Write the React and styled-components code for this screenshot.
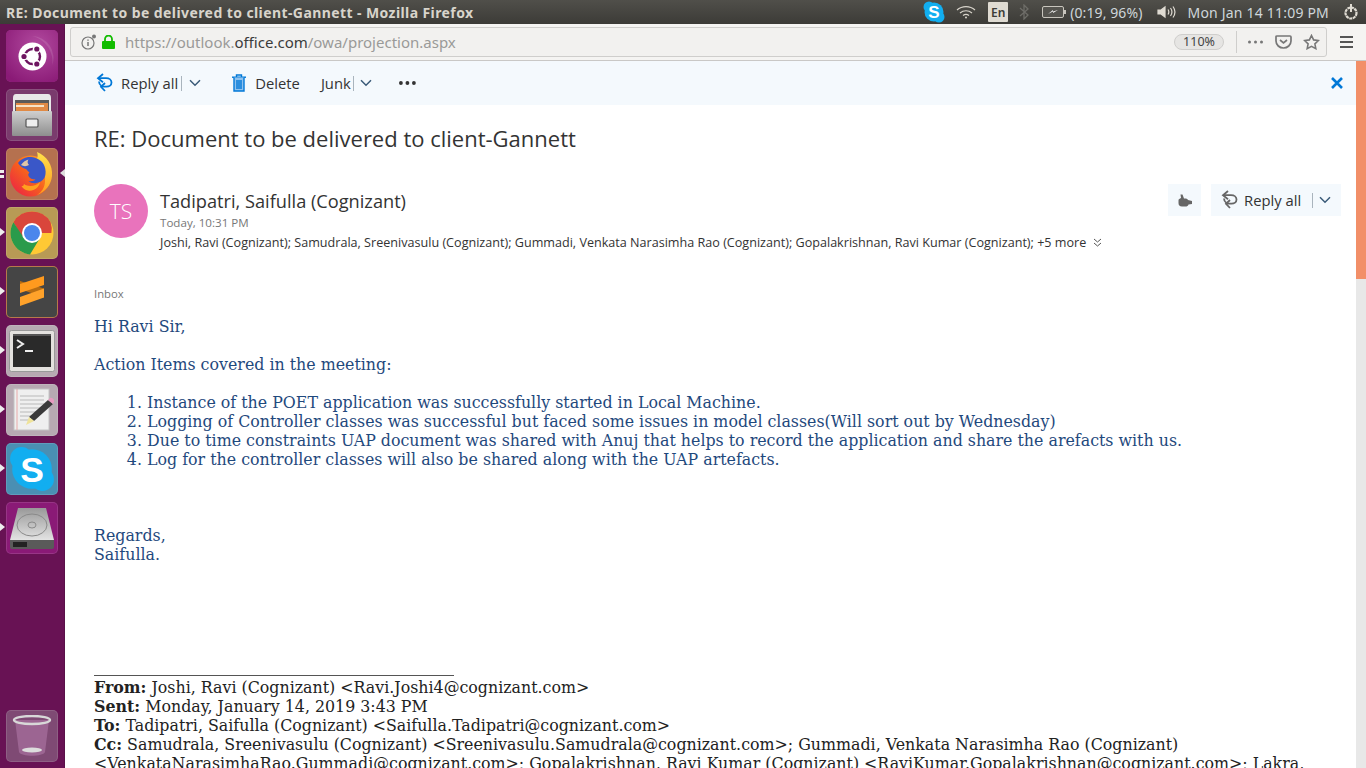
import React from "react";
import styled, { createGlobalStyle } from "styled-components";

const Global = createGlobalStyle`
  html, body { margin: 0; padding: 0; height: 768px; overflow: hidden; background: #fff; }
  #root { height: 768px; }
  * { box-sizing: border-box; }
`;

const Screen = styled.div`
  width: 1366px; height: 768px; display: flex; flex-direction: column; overflow: hidden;
`;
const TopBar = styled.header`
  height: 24px; flex: none; display: flex; align-items: center; padding: 0 0 0 6px;
  background: linear-gradient(#504f4a, #3c3b37);
  color: #dfdbd2; font-family: "Noto Sans", sans-serif; font-size: 14px;
`;
const WindowTitle = styled.div`
  font-weight: 700; letter-spacing: 0.41px; white-space: nowrap; flex: 1; color: #d8d4cb;
`;
const Tray = styled.div`
  display: flex; align-items: center; height: 24px; flex: none;
`;
const TrayIcon = styled.span`
  display: flex; align-items: center; margin-left: ${p => p.$ml || 0}px;
`;
const TrayText = styled.span`
  margin-left: ${p => p.$ml || 0}px; white-space: nowrap; font-size: 14px; color: #cfd6da;
  letter-spacing: ${p => p.$ls || 0}px;
`;
const LangBox = styled.span`
  width: 20px; height: 20px; background: #dfdbd2; color: #3c3b37; border-radius: 1px; margin-left: 12px;
  display: flex; align-items: center; justify-content: center; font-size: 12px; font-weight: 600;
`;
const Body = styled.div`
  flex: 1; display: flex; min-height: 0;
`;
const Launcher = styled.nav`
  width: 65px; flex: none; background: #681254; padding: 6px 0 0 6px; display: flex; flex-direction: column; gap: 7px;
  position: relative; border-right: 1px solid #5a1049;
`;
const Tile = styled.div`
  width: 52px; height: 52px; border-radius: 5px; position: relative; display: flex; align-items: center; justify-content: center;
  background: ${p => p.$bg}; box-shadow: inset 0 0 0 1px ${p => p.$edge || "rgba(255,255,255,.12)"};
`;
const TrashTile = styled(Tile)`
  margin-top: auto; margin-bottom: 6px;
`;
const RunPip = styled.i`
  position: absolute; left: -6px; top: 21px; width: 0; height: 0;
  border-left: 5px solid #eee; border-top: 4px solid transparent; border-bottom: 4px solid transparent;
`;
const DoublePip = styled.i`
  position: absolute; left: -6px; top: 22px; width: 4px; height: 8px;
  background: linear-gradient(#eee 0 3px, transparent 3px 5px, #eee 5px);
`;
const ActivePip = styled.i`
  position: absolute; right: -7px; top: 21px; width: 0; height: 0;
  border-right: 5px solid #ddd; border-top: 4px solid transparent; border-bottom: 4px solid transparent;
`;
const Main = styled.div`
  flex: 1; display: flex; flex-direction: column; min-width: 0; background: #fff;
`;
const NavBar = styled.div`
  height: 37px; flex: none; background: #f5f4f2; border-bottom: 1px solid #c9c8c6; display: flex; align-items: center; padding: 0 0 1px 5px;
`;
const UrlBox = styled.div`
  width: 1257px; height: 30px; background: #f2f1ef; border: 1px solid #cfcecc; border-radius: 3px;
  display: flex; align-items: center; padding: 0 0 0 10px;
`;
const LockIcon = styled.svg`
  margin-left: 5px; flex: none;
`;
const Url = styled.div`
  flex: 1; margin-left: 10px; font-family: "Noto Sans", sans-serif; font-size: 15px; color: #9a9a98; white-space: nowrap;
`;
const UrlStrong = styled.span`
  color: #3b3b3b;
`;
const Zoom = styled.div`
  width: 50px; height: 16px; border-radius: 8px; border: 1px solid #cfcecc; background: #e6e5e3; color: #444;
  font: 12.5px "Noto Sans", sans-serif; display: flex; align-items: center; justify-content: center;
`;
const UrlDivider = styled.div`
  width: 1px; height: 22px; background: #cfcecc; margin: 0 11px 0 12px;
`;
const UrlActions = styled.div`
  display: flex; align-items: center; gap: 11px; padding-right: 6px;
`;
const Burger = styled.div`
  margin-left: 13px; display: flex;
`;
const ContentRow = styled.div`
  flex: 1; display: flex; min-height: 0;
`;
const Mail = styled.main`
  flex: 1; min-width: 0; overflow: hidden; font-family: "Open Sans", sans-serif; color: #333;
`;
const ScrollTrack = styled.div`
  width: 10px; flex: none; background: #e8e8e8;
`;
const ScrollThumb = styled.div`
  height: 218px; background: #f28f68;
`;
const Toolbar = styled.div`
  height: 44px; background: #f4f9fd; display: flex; align-items: center; padding: 0 13px 0 31px; font-size: 14.8px; color: #333;
`;
const ToolItem = styled.div`
  display: flex; align-items: center; white-space: nowrap; margin-left: ${p => p.$ml || 0}px;
`;
const ToolLabel = styled.span`
  margin-left: ${p => p.$ml || 0}px;
`;
const Sep = styled.span`
  width: 1px; height: 15px; background: #a9b4bd; margin: 1px ${p => p.$mr || 7}px 0 ${p => p.$ml || 3}px;
`;
const Dots = styled.div`
  margin-left: 27px; display: flex;
`;
const CloseBtn = styled.div`
  margin-left: auto; display: flex;
`;
const Subject = styled.h1`
  margin: 18px 0 0 29px; font-size: 22px; font-weight: 400; line-height: 30px; color: #333; white-space: nowrap;
`;
const HeaderRow = styled.div`
  display: flex; margin: 31px 15px 0 29px; position: relative;
`;
const Avatar = styled.div`
  width: 54px; height: 54px; border-radius: 50%; background: #e973bc; color: #fff; flex: none;
  display: flex; align-items: center; justify-content: center; font-size: 21px; font-weight: 300;
`;
const Meta = styled.div`
  margin-left: 12px; flex: 1; min-width: 0;
`;
const SenderName = styled.div`
  font-size: 18.2px; line-height: 24px; margin-top: 5px; color: #333; white-space: nowrap;
`;
const Time = styled.div`
  font-size: 11.6px; line-height: 17px; color: #777; margin-top: 1px;
`;
const Recipients = styled.div`
  font-size: 12.6px; line-height: 17px; margin-top: 3px; color: #333; white-space: nowrap; display: flex; align-items: center;
`;
const Actions = styled.div`
  position: absolute; right: 0; top: 0; display: flex; gap: 10px;
`;
const LikeBtn = styled.div`
  height: 32px; width: 33px; background: #f4f9fd; display: flex; align-items: center; justify-content: center;
`;
const ReplyBtn = styled.div`
  height: 32px; width: 130px; background: #f4f9fd; display: flex; align-items: center; padding-left: 10px; font-size: 14.8px; color: #333;
`;
const Folder = styled.div`
  margin: 34px 0 0 29px; font-size: 11.3px; line-height: 17px; color: #777;
`;
const MsgBody = styled.div`
  margin: 15px 15px 0 29px; font-family: "DejaVu Serif", serif; font-size: 15.84px; line-height: 19px; color: #1f497d;
`;
const Para = styled.p`
  margin: 0 0 ${p => p.$mb || 0}px 0; min-height: 19px; white-space: nowrap;
`;
const Steps = styled.ol`
  margin: 19px 0 0 0; padding: 0 0 0 53px;
`;
const Quote = styled.div`
  margin: 111px 15px 0 29px; font-family: "DejaVu Serif", serif; font-size: 15.84px; line-height: 19px; color: #222;
`;
const Rule = styled.div`
  width: 360px; height: 1px; background: #555; margin-bottom: 2px;
`;
const QuoteLine = styled.div`
  white-space: nowrap;
`;

const Chevron = ({ c = "#3a5a78" }) => (
  <svg width="12" height="8" viewBox="0 0 12 8"><path d="M1 1.2 6 6.2 11 1.2" fill="none" stroke={c} strokeWidth="1.5" /></svg>
);
const ReplyAllIcon = ({ c }) => (
  <svg width="17" height="20" viewBox="0 0 17 20" fill="none" stroke={c} strokeWidth="1.8">
    <path d="M7 1 2 5.200l5 4" /><path d="M2.500 5.200h7.500c3.400 0 5.500 1.900 5.500 4.300 0 2.500-2.200 4.200-5 4.200H5.500" />
    <path d="M9 10 5 13.800l4 4.200" /><path d="M3 8.500c0 2 1 3.500 2.500 4.500" />
  </svg>
);
const TrashIcon = () => (
  <svg width="14" height="18" viewBox="0 0 14 18" fill="none" stroke="#0078d7" strokeWidth="1.4">
    <path d="M0 3.200h14" /><path d="M4.500 3V1h5v2" />
    <path d="M2 3.500V17h10V3.500" fill="#8fc2ee" /><path d="M5 6v9M7 6v9M9 6v9" />
  </svg>
);
const MoreDots = ({ c = "#333", r = 1.9, w = 18, gap = 6.5 }) => (
  <svg width={w} height="6" viewBox={`0 0 ${w} 6`} fill={c}>
    <circle cx={r} cy="3" r={r} /><circle cx={r + gap} cy="3" r={r} /><circle cx={r + gap * 2} cy="3" r={r} />
  </svg>
);
const CloseIcon = () => (
  <svg width="12" height="12" viewBox="0 0 12 12"><path d="M1 1l10 10M11 1 1 11" stroke="#0078d7" strokeWidth="2.6" /></svg>
);
const ThumbIcon = () => (
  <svg width="14" height="13" viewBox="0 0 14 13"><path d="M2.500.5h2L6 4.500h1.500c1 0 2 .5 2.500 1.500L14 7v3l-3.500.5c-.5 1.500-1.500 2-3 2H4C1.500 12.500.5 11 .5 9V6.500c0-1 .5-1.500 1.500-2L3 4z" fill="#666" /></svg>
);
const MoreChevrons = () => (
  <svg width="9" height="10" viewBox="0 0 9 10" fill="none" stroke="#555" strokeWidth="1"><path d="M1 1l3.500 3L8 1M1 5l3.500 3L8 5" /></svg>
);

const UbuntuLogo = () => (
  <svg width="52" height="52" viewBox="0 0 52 52">
    <defs><radialGradient id="ug" cx=".6" cy=".3" r=".8"><stop offset="0" stopColor="#b24a9f" /><stop offset="1" stopColor="#8a1a76" /></radialGradient></defs>
    <rect width="52" height="52" rx="5" fill="url(#ug)" />
    <path d="M26 6a22 22 0 0 1 20 30A26 26 0 0 0 26 6z" fill="#fff" opacity=".12" />
    <circle cx="26.500" cy="26.500" r="14" fill="#fff" />
    <circle cx="26.500" cy="26.500" r="7.500" fill="none" stroke="#6e1560" strokeWidth="2.400" />
    <g fill="#fff"><circle cx="19" cy="26.500" r="3.600" /><circle cx="30.200" cy="20" r="3.600" /><circle cx="30.200" cy="33" r="3.600" /></g>
    <g fill="#6e1560"><circle cx="18" cy="26.500" r="2.600" /><circle cx="30.800" cy="19" r="2.600" /><circle cx="30.800" cy="34" r="2.600" /></g>
  </svg>
);
const FilesLogo = () => (
  <svg width="42" height="44" viewBox="0 0 42 44">
    <defs><linearGradient id="fg" x1="0" y1="0" x2="0" y2="1"><stop offset="0" stopColor="#cfcfcf" /><stop offset="1" stopColor="#8e8e8e" /></linearGradient></defs>
    <path d="M2 5Q2 1 5 1h32q3 0 3 4v14H2z" fill="#e8e8e8" />
    <rect x="4" y="7" width="34" height="12" fill="#5a5a5a" />
    <rect x="5" y="10" width="32" height="9" fill="#e08a45" />
    <rect x="5" y="12" width="28" height="2" fill="#f6e3c8" />
    <rect x="1" y="18" width="40" height="25" rx="1" fill="url(#fg)" />
    <rect x="15" y="26" width="12" height="8" rx="1" fill="#eee" stroke="#555" strokeWidth="1.200" />
  </svg>
);
const FirefoxLogo = () => (
  <svg width="46" height="46" viewBox="0 0 46 46">
    <defs>
      <linearGradient id="ffg" x1="0" y1="1" x2="1" y2="0"><stop offset="0" stopColor="#ea1a4a" /><stop offset=".5" stopColor="#f6611e" /><stop offset="1" stopColor="#ffb52a" /></linearGradient>
      <linearGradient id="ffy" x1="0" y1="0" x2="0" y2="1"><stop offset="0" stopColor="#ffe14a" /><stop offset="1" stopColor="#ff9a1f" /></linearGradient>
    </defs>
    <circle cx="21.500" cy="25" r="20.500" fill="url(#ffg)" />
    <path d="M28 1c10 4 16 13 15 24-.800 9-7 16-15 19 5-3 8-8 8-14 1-8-3-15-9-20 2-3 2-6 1-9z" fill="url(#ffy)" />
    <path d="M9 12c3-4 8-6.500 13-6 5.500.500 10 3 12.500 7 1.500 3 2.500 6.500 2 10-.500 5-4 8-9 9-3 .500-6 0-8-2 3 .500 5.500 0 7-1.500-3 0-6-1-7-3.500-.500-1.500 0-2.500 1-3.200L17 18c-3-.500-6-3-8-6z" fill="#3a57c8" />
    <path d="M15 33c5 3.500 12 2 16-2-.800 6-6.500 9.500-12 8.500-3-.500-5-2-6.500-4.500 1 .3 2 .2 2.500-2z" fill="#ffa01f" />
    <path d="M12 14c2-3 5-5 7.500-5.500-1.500 2-1 4 .500 5.500-2.500 1.500-5.500 1.500-8 0z" fill="#ffd9a0" opacity=".85" />
  </svg>
);
const ChromeLogo = () => (
  <svg width="44" height="44" viewBox="0 0 44 44">
    <circle cx="22" cy="22" r="21.500" fill="#ffc934" />
    <path d="M22 .5A21.500 21.500 0 0 0 3.400 11.200L12 26l10-4h19.400A21.500 21.500 0 0 0 40.600 11.200 21.500 21.500 0 0 0 22 .5z" fill="#d9463b" />
    <path d="M3.400 11.200A21.500 21.500 0 0 0 20 43.400L30 27H14z" fill="#2a9b4b" />
    <circle cx="22" cy="22" r="10" fill="#fff" /><circle cx="22" cy="22" r="8" fill="#4a86ec" />
  </svg>
);
const SublimeLogo = () => (
  <svg width="26" height="32" viewBox="0 0 26 32">
    <path d="M1 13l24 8.500v-9L1 5z" fill="#b86d12" />
    <path d="M25 0v9L1 17V8z" fill="#ff9a1e" />
    <path d="M25 12.500v9L1 30v-9z" fill="#ffa22a" />
  </svg>
);
const TerminalLogo = () => (
  <svg width="46" height="42" viewBox="0 0 46 42">
    <rect x=".5" y=".5" width="45" height="41" rx="2" fill="#e3e1de" stroke="#999" />
    <rect x="4" y="4" width="38" height="33" fill="#2a2a2a" />
    <rect x="4" y="4" width="38" height="2" fill="#555" />
    <path d="M8 10l6 4-6 4" fill="none" stroke="#eee" strokeWidth="2" /><rect x="16" y="20" width="8" height="2" fill="#eee" />
  </svg>
);
const EditorLogo = () => (
  <svg width="44" height="44" viewBox="0 0 44 44">
    <rect x="4" y="1" width="35" height="41" fill="#efefef" stroke="#c4c4c4" />
    <path d="M7 1v41" stroke="#e7a9a9" />
    <g stroke="#a5a5a5" strokeWidth=".7"><path d="M10 8h24M10 12h24M10 16h24M10 20h22M10 24h18M10 28h14M10 32h10" /></g>
    <path d="M38 12l5 4-19 17-5-4z" fill="#3a3a3a" /><path d="M38 12l2-2c1.500-1 4.500 1 4 3.500l-1 2.500z" fill="#e79ac0" />
    <path d="M19 29l5 4-8 4z" fill="#efe39a" />
  </svg>
);
const SkypeLogo = ({ size = 46 }) => (
  <svg width={size} height={size} viewBox="0 0 44 44">
    <circle cx="12" cy="12" r="11" fill="#12aef0" /><circle cx="32" cy="32" r="11" fill="#12aef0" /><circle cx="22" cy="22" r="19" fill="#12aef0" />
    <text x="22" y="34" textAnchor="middle" fontFamily="Liberation Sans, sans-serif" fontWeight="700" fontSize="34" fill="#fff">S</text>
  </svg>
);
const DiskLogo = () => (
  <svg width="46" height="44" viewBox="0 0 46 44">
    <defs><linearGradient id="dg" x1="0" y1="0" x2="0" y2="1"><stop offset="0" stopColor="#999" /><stop offset="1" stopColor="#e3e3e3" /></linearGradient></defs>
    <path d="M9 2h28l8 32H1z" fill="url(#dg)" /><ellipse cx="23" cy="19" rx="15" ry="11" fill="none" stroke="#8a8a8a" /><ellipse cx="23" cy="19" rx="4" ry="3" fill="none" stroke="#8a8a8a" />
    <path d="M1 34h44v7q0 2-2 2H3q-2 0-2-2z" fill="#5a5a5a" /><rect x="4" y="36" width="14" height="5" fill="#222" />
  </svg>
);
const TrashLogo = () => (
  <svg width="40" height="42" viewBox="0 0 40 42">
    <path d="M3 5l4 32c2 5 24 5 26 0l4-32z" fill="#a66f9c" opacity=".75" />
    <ellipse cx="20" cy="5" rx="18" ry="4" fill="none" stroke="#d8d8d8" strokeWidth="2.400" />
    <ellipse cx="20" cy="35" rx="10" ry="2.600" fill="#ddd" />
  </svg>
);

const TopBarIcons = {
  wifi: <svg width="20" height="14" viewBox="0 0 20 14" fill="none" stroke="#d8d4cb" strokeWidth="1.200"><path d="M1 5c5-4.500 13-4.500 18 0M4 8c3.500-3 8.500-3 12 0M7 10.500c2-1.600 4-1.600 6 0" /><circle cx="10" cy="12.500" r="1" fill="#d8d4cb" stroke="none" /></svg>,
  bt: <svg width="10" height="16" viewBox="0 0 10 16" fill="none" stroke="#6e6d68" strokeWidth="1.300"><path d="M1 4l8 7-4 4V1l4 4-8 7" /></svg>,
  battery: <svg width="24" height="12" viewBox="0 0 24 12"><rect x=".5" y=".5" width="21" height="11" rx="1.500" fill="#55544f" stroke="#c8c5bd" /><rect x="22" y="4" width="2" height="4" fill="#c8c5bd" /><path d="M6 8l5-2.500V7l5-3-5 1.500V4z" fill="#eee" /></svg>,
  sound: <svg width="20" height="14" viewBox="0 0 20 14" fill="none" stroke="#dfdbd2" strokeWidth="1.200"><path d="M1 5h3l4-3v10L4 9H1z" fill="#dfdbd2" /><path d="M11 4.500c1 1.500 1 3.500 0 5M13.500 3c1.800 2.500 1.800 5.500 0 8M16 1.500c2.500 3.500 2.500 7.500 0 11" /></svg>,
  power: <svg width="18" height="18" viewBox="0 0 18 18" fill="none" stroke="#dfdbd2"><circle cx="9" cy="10" r="5.500" strokeWidth="2.200" strokeDasharray="3 .6" /><path d="M9 1v8" strokeWidth="2" /></svg>,
};

const steps = [
  "Instance of the POET application was successfully started in Local Machine.",
  "Logging of Controller classes was successful but faced some issues in model classes(Will sort out by Wednesday)",
  "Due to time constraints UAP document was shared with Anuj that helps to record the application and share the arefacts with us.",
  "Log for the controller classes will also be shared along with the UAP artefacts.",
];

export default function App() {
  return (
    <Screen>
      <Global />
      <TopBar>
        <WindowTitle>RE: Document to be delivered to client-Gannett - Mozilla Firefox</WindowTitle>
        <Tray>
          <TrayIcon><SkypeLogo size={22} /></TrayIcon>
          <TrayIcon $ml={11}>{TopBarIcons.wifi}</TrayIcon>
          <LangBox>En</LangBox>
          <TrayIcon $ml={11}>{TopBarIcons.bt}</TrayIcon>
          <TrayIcon $ml={13}>{TopBarIcons.battery}</TrayIcon>
          <TrayText $ml={4} $ls={0.1}>(0:19, 96%)</TrayText>
          <TrayIcon $ml={14}>{TopBarIcons.sound}</TrayIcon>
          <TrayText $ml={11} $ls={0.2}>Mon Jan 14 11:09 PM</TrayText>
          <TrayIcon $ml={13}>{TopBarIcons.power}</TrayIcon>
          <TrayIcon $ml={6} />
        </Tray>
      </TopBar>
      <Body>
        <Launcher>
          <Tile $bg="#8a1a76"><UbuntuLogo /></Tile>
          <Tile $bg="#7a3b6d"><FilesLogo /></Tile>
          <Tile $bg="#b5714f"><DoublePip /><FirefoxLogo /><ActivePip /></Tile>
          <Tile $bg="#b89a55"><RunPip /><ChromeLogo /></Tile>
          <Tile $bg="#454545" $edge="#b8794a"><RunPip /><SublimeLogo /></Tile>
          <Tile $bg="#b7a9b2"><RunPip /><TerminalLogo /></Tile>
          <Tile $bg="#b7a9b2"><RunPip /><EditorLogo /></Tile>
          <Tile $bg="#4a8fb3"><RunPip /><SkypeLogo /></Tile>
          <Tile $bg="#8a1a76"><RunPip /><DiskLogo /></Tile>
          <TrashTile $bg="#7f4a74"><TrashLogo /></TrashTile>
        </Launcher>
        <Main>
          <NavBar>
            <UrlBox>
              <svg width="16" height="16" viewBox="0 0 16 16" fill="none"><circle cx="7" cy="9" r="6" stroke="#777" strokeWidth="1.200" /><path d="M7 8v4M7 5.500v1.300" stroke="#777" strokeWidth="1.500" /><circle cx="13" cy="2.500" r="2" fill="#777" /></svg>
              <LockIcon width="13" height="14" viewBox="0 0 13 14"><rect y="6" width="13" height="8" rx="1" fill="#12bc00" /><path d="M3 6V4a3.500 3.500 0 0 1 7 0v2" fill="none" stroke="#12bc00" strokeWidth="1.800" /></LockIcon>
              <Url>https://outlook.<UrlStrong>office.com</UrlStrong>/owa/projection.aspx</Url>
              <Zoom>110%</Zoom>
              <UrlDivider />
              <UrlActions>
                <MoreDots c="#777" r={1.500} w={16} gap={6} />
                <svg width="17" height="14" viewBox="0 0 17 14" fill="none" stroke="#777" strokeWidth="1.700"><path d="M1 2c0-.7.400-1 1-1h13c.6 0 1 .3 1 1v4c0 4-3.500 7-7.500 7S1 10 1 6z" /><path d="M5 5l3.500 3L12 5" /></svg>
                <svg width="17" height="16" viewBox="0 0 17 16" fill="none" stroke="#777" strokeWidth="1.600"><path d="M8.500 1.500l2.100 4.400 4.800.6-3.500 3.300.9 4.800-4.300-2.300-4.300 2.300.9-4.800L1.600 6.500l4.800-.6z" /></svg>
              </UrlActions>
            </UrlBox>
            <Burger><svg width="13" height="12" viewBox="0 0 13 12" fill="#555"><rect width="13" height="2" /><rect y="5" width="13" height="2" /><rect y="10" width="13" height="2" /></svg></Burger>
          </NavBar>
          <ContentRow>
            <Mail>
              <Toolbar>
                <ToolItem><ReplyAllIcon c="#0078d7" /><ToolLabel $ml={8}>Reply all</ToolLabel><Sep /><Chevron /></ToolItem>
                <ToolItem $ml={31}><TrashIcon /><ToolLabel $ml={9}>Delete</ToolLabel></ToolItem>
                <ToolItem $ml={21}>Junk<Sep $ml={2} $mr={6} /><Chevron /></ToolItem>
                <Dots><MoreDots /></Dots>
                <CloseBtn><CloseIcon /></CloseBtn>
              </Toolbar>
              <Subject>RE: Document to be delivered to client-Gannett</Subject>
              <HeaderRow>
                <Avatar>TS</Avatar>
                <Meta>
                  <SenderName>Tadipatri, Saifulla (Cognizant)</SenderName>
                  <Time>Today, 10:31 PM</Time>
                  <Recipients>Joshi, Ravi (Cognizant); Samudrala, Sreenivasulu (Cognizant); Gummadi, Venkata Narasimha Rao (Cognizant); Gopalakrishnan, Ravi Kumar (Cognizant); +5 more&nbsp;&nbsp;<MoreChevrons /></Recipients>
                </Meta>
                <Actions>
                  <LikeBtn><ThumbIcon /></LikeBtn>
                  <ReplyBtn><ReplyAllIcon c="#666" /><ToolLabel $ml={6}>Reply all</ToolLabel><Sep $ml={11} $mr={6} /><Chevron /></ReplyBtn>
                </Actions>
              </HeaderRow>
              <Folder>Inbox</Folder>
              <MsgBody>
                <Para $mb={19}>Hi Ravi Sir,</Para>
                <Para>Action Items covered in the meeting:</Para>
                <Steps>{steps.map(s => <li key={s}>{s}</li>)}</Steps>
                <Para $mb={38} />
                <Para>Regards,</Para>
                <Para>Saifulla.</Para>
              </MsgBody>
              <Quote>
                <Rule />
                <QuoteLine><b>From:</b> Joshi, Ravi (Cognizant) &lt;Ravi.Joshi4@cognizant.com&gt;</QuoteLine>
                <QuoteLine><b>Sent:</b> Monday, January 14, 2019 3:43 PM</QuoteLine>
                <QuoteLine><b>To:</b> Tadipatri, Saifulla (Cognizant) &lt;Saifulla.Tadipatri@cognizant.com&gt;</QuoteLine>
                <QuoteLine><b>Cc:</b> Samudrala, Sreenivasulu (Cognizant) &lt;Sreenivasulu.Samudrala@cognizant.com&gt;; Gummadi, Venkata Narasimha Rao (Cognizant)</QuoteLine>
                <QuoteLine>&lt;VenkataNarasimhaRao.Gummadi@cognizant.com&gt;; Gopalakrishnan, Ravi Kumar (Cognizant) &lt;RaviKumar.Gopalakrishnan@cognizant.com&gt;; Lakra,</QuoteLine>
              </Quote>
            </Mail>
            <ScrollTrack><ScrollThumb /></ScrollTrack>
          </ContentRow>
        </Main>
      </Body>
    </Screen>
  );
}
